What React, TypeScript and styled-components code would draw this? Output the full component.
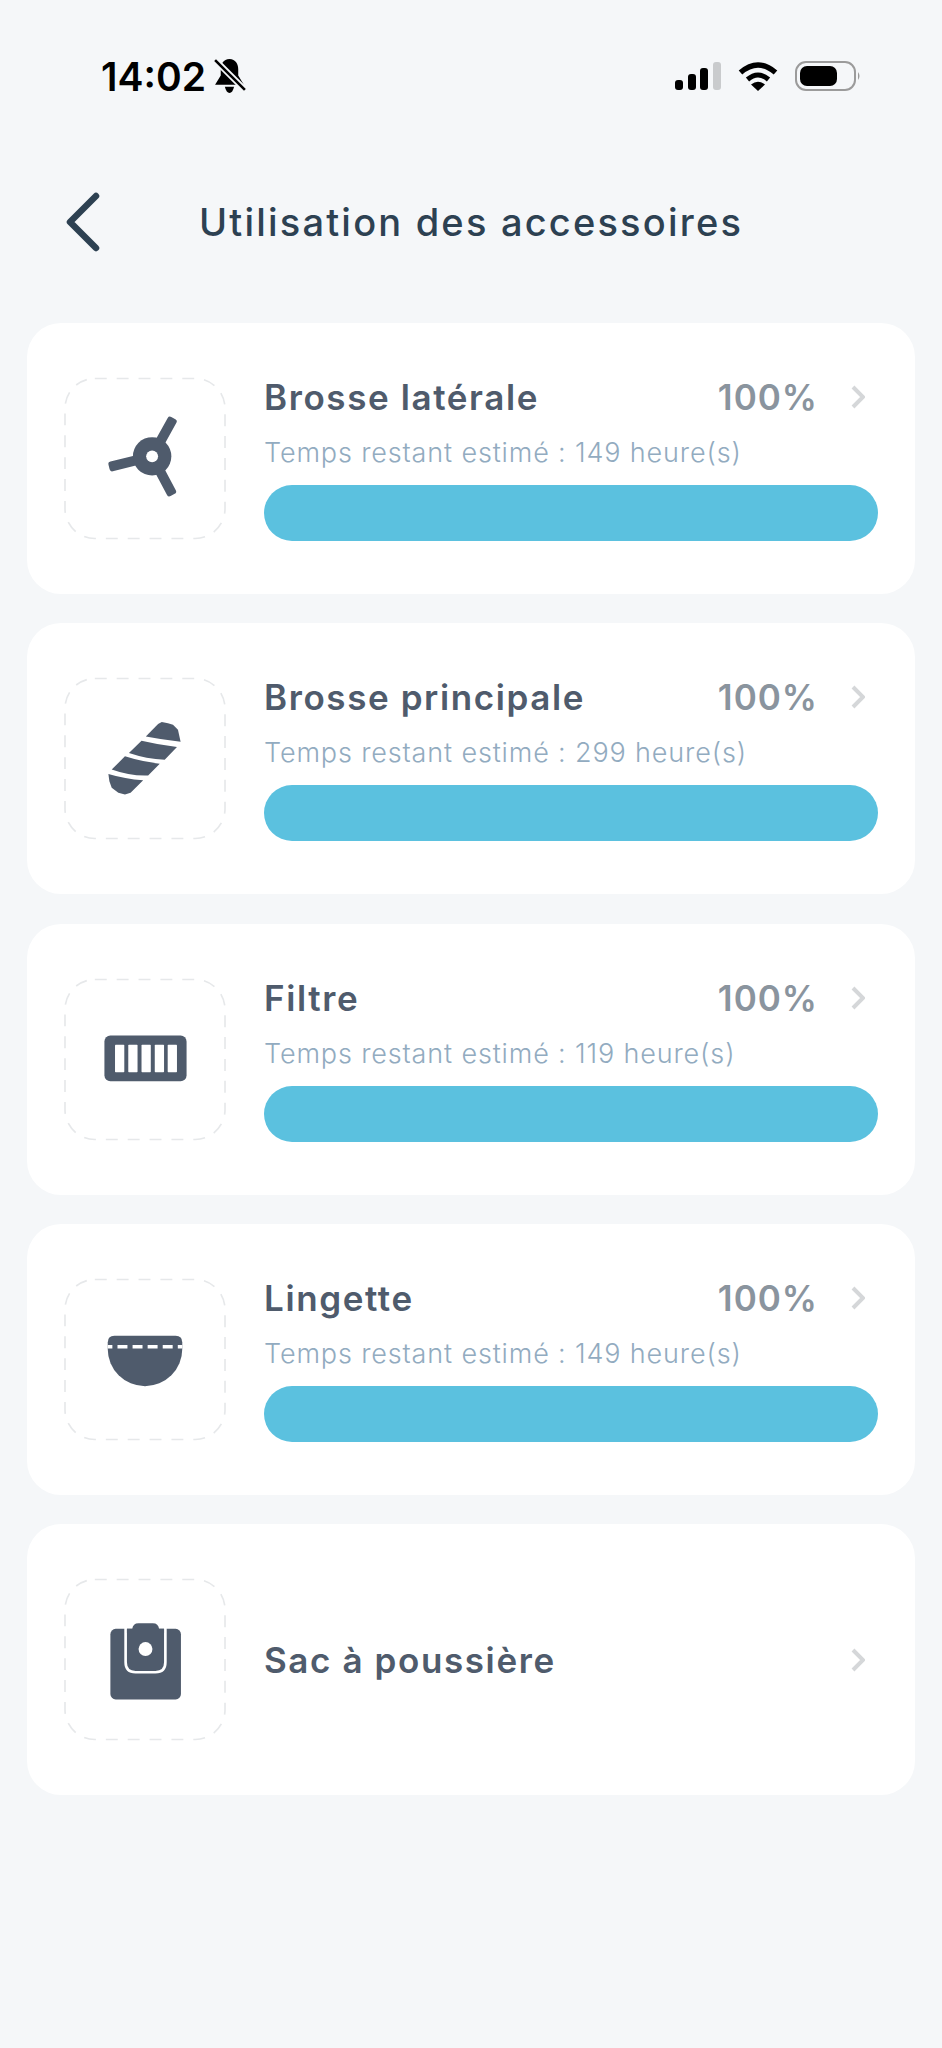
import styled, { createGlobalStyle } from "styled-components";

const GlobalStyle = createGlobalStyle`
    html, body {
        margin : 0;
        padding : 0;
        background : #f5f7f9;
        font-family : "Inter", "Noto Sans", sans-serif;
    }
`

// frame + glyph share one svg, coords are in zoomed (3x) units
const Frame = ({ children }: { children: React.ReactNode }) => (
    <IconSvg viewBox="0 0 489 489">
        <rect x="3" y="3" width="483" height="483" rx="90" fill="none" stroke="#e6e8ea" strokeWidth="5" strokeDasharray="36 30" />
        {children}
    </IconSvg>
);

const SideBrush = () => (
    <Frame>
        <g fill="#4f5b6c">
            <rect x="-15" y="-132" width="30" height="132" rx="8" transform="translate(266 238) rotate(29)" />
            <rect x="-15" y="-132" width="30" height="132" rx="8" transform="translate(266 238) rotate(152)" />
            <rect x="-15" y="-134" width="30" height="134" rx="8" transform="translate(266 238) rotate(-104)" />
            <circle cx="266" cy="238" r="58" />
        </g>
        <circle cx="266" cy="238" r="18" fill="#fff" />
    </Frame>
);

const MainBrush = () => (
    <Frame>
        <g fill="#4f5b6c" transform="translate(-71 -52)">
            <path d="M318 230 L355 192 L366 186 L385 190 L400 195 L415 210 L423 246 Q370 240 318 230 Z" />
            <path d="M305 243 Q360 256 412 262 L375 300 Q320 298 267 280 Z" />
            <path d="M255 290 Q305 306 360 312 L325 348 Q270 350 215 330 Z" />
            <path d="M205 343 Q255 358 310 362 L272 400 L255 405 L235 400 L215 385 L208 365 Z" />
        </g>
    </Frame>
);

const FilterIcon = () => (
    <Frame>
        <g transform="translate(-71 -55)">
            <rect x="193" y="227" width="248" height="138" rx="18" fill="#4f5b6c" />
            {[225, 265, 305, 345, 384].map((x) => (
                <rect key={x} x={x} y="255" width="28" height="83" rx="2" fill="#fff" />
            ))}
        </g>
    </Frame>
);

const WipeIcon = () => (
    <Frame>
        <g transform="translate(-71 -55)">
            <path d="M203 248 Q203 228 223 228 H408 Q428 228 428 248 V268 A112.500 112 0 0 1 203 268 Z" fill="#4f5b6c" />
            <line x1="203" y1="261" x2="428" y2="261" stroke="#fff" strokeWidth="10" strokeDasharray="30 15.500" strokeDashoffset="16" />
        </g>
    </Frame>
);

const BagIcon = () => (
    <Frame>
        <g transform="translate(-71 -55)">
            <rect x="211" y="207" width="213" height="213" rx="16" fill="#4f5b6c" />
            <path d="M257 204 V308 Q257 338 287 338 H347 Q377 338 377 308 V204" fill="none" stroke="#fff" strokeWidth="8" />
            <path d="M261 207 H277 Q279 190 296 190 H339 Q356 190 358 207 H373 V220 H261 Z" fill="#4f5b6c" />
            <circle cx="317" cy="268" r="21" fill="#fff" />
        </g>
    </Frame>
);

const items = [
    { name: "Brosse latérale", hours: 149, icon: <SideBrush /> },
    { name: "Brosse principale", hours: 299, icon: <MainBrush /> },
    { name: "Filtre", hours: 119, icon: <FilterIcon /> },
    { name: "Lingette", hours: 149, icon: <WipeIcon /> },
];

const Chevron = () => (
    <ChevronSvg viewBox="0 0 14 24">
        <polyline points="2,2 12,12 2,22" fill="none" stroke="#d5d7d9" strokeWidth="4" />
    </ChevronSvg>
);

const App = () => {
    return <>
        <GlobalStyle />
        <Page>
            <StatusBar>
                <TimeGroup>
                    <Time>14:02</Time>
                    <svg width="32" height="36" viewBox="0 0 31 35">
                        <path d="M15 1 C9 1 6.500 6 6.500 11 V17 L1 26 H29 L23.500 17 V11 C23.500 6 21 1 15 1 Z" fill="#000" />
                        <path d="M10.500 28 H19.500 Q18 34 15 34 Q12 34 10.500 28 Z" fill="#000" />
                        <line x1="1" y1="2" x2="30" y2="31" stroke="#f5f7f9" strokeWidth="6" />
                        <line x1="1" y1="2" x2="30" y2="31" stroke="#000" strokeWidth="2.500" />
                    </svg>
                </TimeGroup>
                <Indicators>
                    <svg width="46" height="28" viewBox="0 0 46 28">
                        <rect x="0" y="18" width="8" height="10" rx="3" fill="#000" />
                        <rect x="13" y="12" width="8" height="16" rx="3" fill="#000" />
                        <rect x="25" y="6" width="8" height="22" rx="3" fill="#000" />
                        <rect x="38" y="0" width="8" height="28" rx="3" fill="#c9cbcd" />
                    </svg>
                    <svg width="40" height="29" viewBox="0 0 40 29">
                        <path d="M2.500 10.500 Q20 -4.500 37.500 10.500" fill="none" stroke="#000" strokeWidth="5.500" />
                        <path d="M9.500 17.500 Q20 8.500 30.500 17.500" fill="none" stroke="#000" strokeWidth="5" />
                        <path d="M13 22.500 Q20 17 27 22.500 L20 29 Z" fill="#000" />
                    </svg>
                    <svg width="66" height="30" viewBox="0 0 66 30">
                        <rect x="1" y="1" width="59" height="28" rx="10" fill="none" stroke="#9b9b9b" strokeWidth="2" />
                        <rect x="5" y="5" width="37" height="20" rx="7" fill="#000" />
                        <path d="M63 11 Q66 15 63 19 Z" fill="#9b9b9b" />
                    </svg>
                </Indicators>
            </StatusBar>
            <NavBar>
                <svg width="36" height="60" viewBox="0 0 36 60">
                    <polyline points="31,4 5,30 31,56" fill="none" stroke="#2d4152" strokeWidth="6.500" strokeLinecap="round" strokeLinejoin="round" />
                </svg>
                <Heading>Utilisation des accessoires</Heading>
            </NavBar>
            <List>
                {items.map((item) => (
                    <Card key={item.name}>
                        {item.icon}
                        <Body>
                            <TitleRow>
                                <Title>{item.name}</Title>
                                <Percent>100%</Percent>
                                <Chevron />
                            </TitleRow>
                            <Remaining>Temps restant estimé : {item.hours} heure(s)</Remaining>
                            <Bar />
                        </Body>
                    </Card>
                ))}
                <Card>
                    <BagIcon />
                    <Body>
                        <TitleRow>
                            <Title>Sac à poussière</Title>
                            <Chevron />
                        </TitleRow>
                    </Body>
                </Card>
            </List>
        </Page>
    </>;
}

export default App;

const Page = styled.div`
    width : 942px;
    height : 2048px;
    overflow : hidden;
    background : #f5f7f9;
`

const StatusBar = styled.div`
    height : 60px;
    padding : 46px 81px 0 101px;
    display : flex;
    align-items : center;
    justify-content : space-between;
`

const TimeGroup = styled.div`
    display : flex;
    align-items : center;
    gap : 8px;
`

const Time = styled.span`
    font-size : 39px;
    font-weight : 600;
    color : #000;
`

const Indicators = styled.div`
    display : flex;
    align-items : center;
    gap : 17px;
`

const NavBar = styled.div`
    height : 60px;
    margin-top : 86px;
    padding-left : 65px;
    display : flex;
    align-items : center;
    gap : 98px;
`

const Heading = styled.h1`
    margin : 0;
    font-size : 38px;
    font-weight : 500;
    color : #2d4152;
    letter-spacing : 2.2px;
`

const List = styled.div`
    margin-top : 71px;
    padding : 0 27px;
    display : flex;
    flex-direction : column;
    gap : 29.3px;
`

const Card = styled.div`
    height : 271px;
    box-sizing : border-box;
    padding : 0 37px;
    background : #fff;
    border-radius : 34px;
    display : flex;
    align-items : center;
    gap : 38px;
`

const IconSvg = styled.svg`
    width : 162px;
    height : 163px;
    flex : none;
`

const Body = styled.div`
    flex : 1;
    display : flex;
    flex-direction : column;
`

const TitleRow = styled.div`
    display : flex;
    align-items : center;
    padding-right : 13px;
`

const Title = styled.span`
    flex : 1;
    font-size : 35px;
    font-weight : 600;
    color : #4f5b6c;
    letter-spacing : 1.6px;
`

const Percent = styled.span`
    font-size : 35px;
    font-weight : 600;
    color : #8a949e;
    letter-spacing : 1px;
    margin-right : 33px;
`

const ChevronSvg = styled.svg`
    width : 14px;
    height : 24px;
    flex : none;
`

const Remaining = styled.div`
    margin-top : 18px;
    font-size : 27px;
    font-weight : 300;
    color : #92abc0;
    letter-spacing : 0.85px;
`

const Bar = styled.div`
    margin-top : 16px;
    height : 56px;
    border-radius : 28px;
    background : #5bc1df;
`
